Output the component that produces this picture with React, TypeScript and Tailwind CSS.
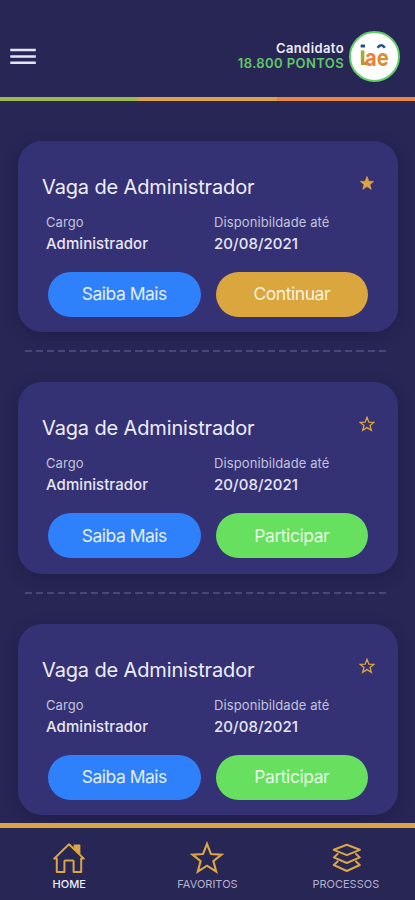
type Job = {
  id: number;
  title: string;
  role: string;
  until: string;
  favorite: boolean;
  started: boolean;
};

const jobs: Job[] = [
  { id: 1, title: "Vaga de Administrador", role: "Administrador", until: "20/08/2021", favorite: true, started: true },
  { id: 2, title: "Vaga de Administrador", role: "Administrador", until: "20/08/2021", favorite: false, started: false },
  { id: 3, title: "Vaga de Administrador", role: "Administrador", until: "20/08/2021", favorite: false, started: false },
];

const STAR = "M12 2 L14.8 9.2 L22.2 9.6 L16.5 14.2 L18.5 21.6 L12 17.4 L5.5 21.6 L7.5 14.2 L1.8 9.6 L9.2 9.2 Z";

function Star({ className, filled, stroke }: { className: string; filled?: boolean; stroke: number }) {
  return (
    <svg viewBox="0 0 24 24" className={className} fill={filled ? "currentColor" : "none"} stroke="currentColor" strokeWidth={stroke}>
      <path d={STAR} />
    </svg>
  );
}

function MenuIcon() {
  return (
    <svg viewBox="0 0 26 18" className="h-[18px] w-[26px]" stroke="#e6e5f4" strokeWidth="2.6">
      <path d="M0.3 3 H25.8 M0.3 9.5 H25.8 M0.3 15.8 H25.8" />
    </svg>
  );
}

function HomeIcon() {
  return (
    <svg viewBox="0 0 32 30" className="h-[30px] w-8" fill="none" stroke="currentColor" strokeWidth="2" strokeLinejoin="round" strokeLinecap="round">
      <path d="M1.2 15.6 L16 1.3 L30.8 15.6 H28.2 V29 H20.6 V18.6 Q20.6 17.6 19.6 17.6 H12.4 Q11.4 17.6 11.4 18.6 V29 H3.8 V15.6 Z" />
      <path d="M21.6 5.6 V2.4 H26.4 V10.6 Z" fill="currentColor" />
    </svg>
  );
}

function LayersIcon() {
  return (
    <svg viewBox="0 0 30 30" className="h-[30px] w-[30px]" fill="none" stroke="currentColor" strokeWidth="2" strokeLinejoin="round" strokeLinecap="round">
      <path d="M15.8 1.8 L28.8 6.8 L15.8 12.2 L2.8 6.8 Z" />
      <path d="M6.6 11 L2.8 14.4 L15.8 20 L28.8 14.4 L25 11" />
      <path d="M6.6 18.4 L2.8 22 L15.8 28 L28.8 22 L25 18.4" />
    </svg>
  );
}

function Logo() {
  return (
    <svg viewBox="0 0 46 46" className="h-[46px] w-[46px] shrink-0" fill="none">
      <rect x="8.6" y="11.4" width="4.4" height="3.2" rx="0.6" fill="#20508c" />
      <path d="M10.6 17.4 V26" stroke="#a3ad35" strokeWidth="3.6" />
      <path d="M10.6 25.5 V30.4 H14.4" stroke="#b59a30" strokeWidth="3.4" />
      <text transform="translate(13 32.6) scale(0.84 1)" fontFamily="Inter" fontWeight="700" fontSize="24">
        <tspan fill="#ee7d3b">a</tspan>
        <tspan fill="#d98f33">e</tspan>
      </text>
      <path d="M25.6 14.8 Q29.2 9.6 32.8 14.8" stroke="#20508c" strokeWidth="2.6" />
    </svg>
  );
}

function JobCard({ job }: { job: Job }) {
  return (
    <article className="h-[191.5px] rounded-[24px] bg-[#353175] pr-[30px] pl-6 pt-8 shadow-[0_4px_14px_rgba(20,16,50,0.35)]">
      <div className="flex h-7 items-center justify-between">
        <h2 className="text-[20px] leading-7 tracking-[-0.14px] text-[#eeeefa]">{job.title}</h2>
        <Star className="mb-2 -mr-[7px] h-4 w-4 text-[#dda63f]" filled={job.favorite} stroke={job.favorite ? 0.8 : 1.9} />
      </div>
      <div className="mt-2.5 ml-1 grid grid-cols-[168px_1fr]">
        <div>
          <p className="text-[13px] leading-[22px] tracking-[0.1px] text-[#c4c2dc]">Cargo</p>
          <p className="text-[15px] leading-[21px] font-medium tracking-[0.06px] text-[#e8e7f5]">{job.role}</p>
        </div>
        <div>
          <p className="text-[13px] leading-[22px] tracking-[0.1px] text-[#c4c2dc]">Disponibildade até</p>
          <p className="text-[15px] leading-[21px] font-medium tracking-[0.06px] text-[#e8e7f5]">{job.until}</p>
        </div>
      </div>
      <div className="mt-[18px] ml-1.5 grid grid-cols-2 gap-[15px]">
        <button className="h-[45px] rounded-full bg-[#2f80fb] text-[17.5px] tracking-[-0.5px] text-[#e3eefe]">Saiba Mais</button>
        <button className={`h-[45px] rounded-full text-[17.5px] tracking-[-0.45px] ${job.started ? "bg-[#dba63e] text-[#fdf3dc]" : "bg-[#67e05f] text-[#e6fce4]"}`}>
          {job.started ? "Continuar" : "Participar"}
        </button>
      </div>
    </article>
  );
}

export default function App() {
  return (
    <div className="flex h-[900px] w-full flex-col overflow-hidden bg-[#282655] font-['Inter',sans-serif]">
      <header className="flex h-[97px] shrink-0 items-center justify-between pt-[15px] pr-[15px] pl-2.5">
        <button aria-label="Menu">
          <MenuIcon />
        </button>
        <div className="flex items-center gap-[5px]">
          <div className="text-right text-[13px] leading-[15.5px] font-semibold tracking-[0.4px]">
            <p className="text-[#eeedf8]">Candidato</p>
            <p className="text-[#62c866]">18.800 PONTOS</p>
          </div>
          <div className="flex h-[51px] w-[51px] items-center justify-center rounded-full border-2 border-[#5fd062] bg-white">
            <Logo />
          </div>
        </div>
      </header>
      <div className="grid h-[4px] shrink-0 grid-cols-3">
        <span className="bg-[#9dba4b]" />
        <span className="bg-[#dda349]" />
        <span className="bg-[#e88549]" />
      </div>

      <main className="min-h-0 flex-1 overflow-hidden pt-[39.6px] pr-[17px] pl-[18px]">
        {jobs.map((job, i) => (
          <div key={job.id}>
            {i > 0 && (
              <div className="flex h-[50.2px] items-start pt-[18px] pr-3 pl-[7px]">
                <div className="h-[2px] w-full bg-[repeating-linear-gradient(90deg,#49467a_0_7px,transparent_7px_11.05px)]" />
              </div>
            )}
            <JobCard job={job} />
          </div>
        ))}
      </main>

      <nav className="grid h-[77px] shrink-0 grid-cols-3 border-t-[5px] border-[#dba544] text-[11px] text-[#b5b3d0]">
        <a className="flex flex-col items-center pt-[14px]">
          <span className="flex h-[31px] items-center text-[#dba544]"><HomeIcon /></span>
          <span className="mt-[3px] leading-4 font-medium text-[#f0effa]">HOME</span>
        </a>
        <a className="flex flex-col items-center pt-[14px]">
          <span className="flex h-[31px] items-center text-[#dba544]"><Star className="h-[34px] w-[34px]" stroke={1.5} /></span>
          <span className="mt-[3px] leading-4">FAVORITOS</span>
        </a>
        <a className="flex flex-col items-center pt-[14px]">
          <span className="flex h-[31px] items-center text-[#dba544]"><LayersIcon /></span>
          <span className="mt-[3px] leading-4">PROCESSOS</span>
        </a>
      </nav>
    </div>
  );
}
